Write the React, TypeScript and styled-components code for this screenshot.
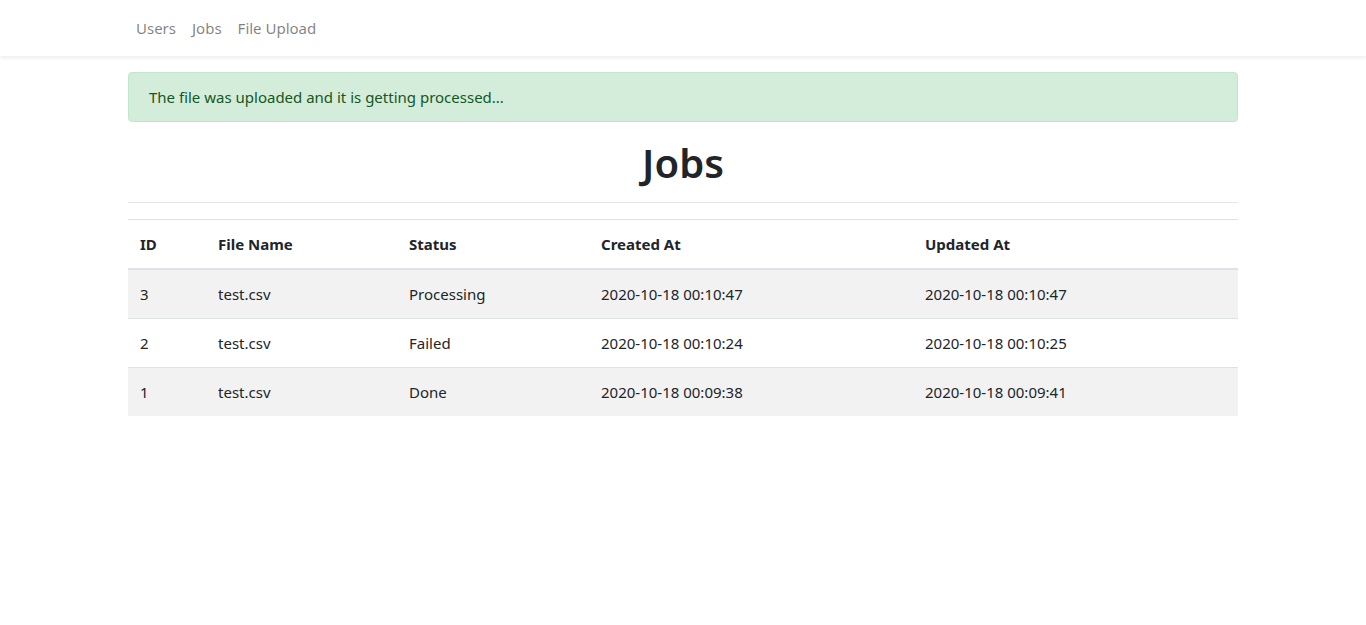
import React from "react";
import styled, { createGlobalStyle } from "styled-components";

const GlobalStyle = createGlobalStyle`
  html, body {
    margin: 0;
    padding: 0;
    background: #fff;
  }
  body {
    font-family: "Noto Sans", "Open Sans", Arial, sans-serif;
    font-size: 15px;
    line-height: 24px;
    color: #212529;
  }
  *, *::before, *::after {
    box-sizing: border-box;
  }
`;

const Navbar = styled.nav`
  height: 56px;
  background: #fff;
  box-shadow: 0 2px 4px rgba(0, 0, 0, 0.075);
  display: flex;
  align-items: center;
`;

const Container = styled.div`
  width: 1110px;
  margin: 0 auto;
`;

const NavList = styled.ul`
  list-style: none;
  margin: 0;
  padding: 0;
  display: flex;
`;

const NavLink = styled.a`
  display: block;
  padding: 8px;
  color: rgba(0, 0, 0, 0.5);
  text-decoration: none;
  cursor: pointer;
`;

const Main = styled(Container)`
  padding-top: 16px;
`;

const Alert = styled.div`
  padding: 12px 20px;
  margin-bottom: 16px;
  background: #d4edda;
  border: 1px solid #c3e6cb;
  border-radius: 4px;
  color: #155724;
`;

const Title = styled.h1`
  margin: 0;
  padding-top: 2px;
  height: 48px;
  font-size: 40px;
  font-weight: 600;
  line-height: 46px;
  text-align: center;
`;

const Rule = styled.hr`
  margin: 16px 0;
  border: 0;
  border-top: 1px solid rgba(0, 0, 0, 0.1);
`;

const Table = styled.table`
  width: 100%;
  table-layout: fixed;
  border-collapse: collapse;
  color: #212529;
`;

const Col = styled.col<{ $w?: number }>`
  width: ${(p) => (p.$w ? `${p.$w}px` : "auto")};
`;

const Th = styled.th`
  padding: 12px;
  text-align: left;
  font-weight: 700;
  border-top: 1px solid #dee2e6;
  border-bottom: 2px solid #dee2e6;
`;

const Row = styled.tr`
  &:nth-of-type(odd) {
    background: rgba(0, 0, 0, 0.05);
  }
`;

const Td = styled.td`
  padding: 12px;
  border-top: 1px solid #dee2e6;
`;

const jobs = [
  { id: 3, name: "test.csv", status: "Processing", created: "2020-10-18 00:10:47", updated: "2020-10-18 00:10:47" },
  { id: 2, name: "test.csv", status: "Failed", created: "2020-10-18 00:10:24", updated: "2020-10-18 00:10:25" },
  { id: 1, name: "test.csv", status: "Done", created: "2020-10-18 00:09:38", updated: "2020-10-18 00:09:41" },
];

export default function App() {
  return (
    <>
      <GlobalStyle />
      <Navbar>
        <Container>
          <NavList>
            <li><NavLink>Users</NavLink></li>
            <li><NavLink>Jobs</NavLink></li>
            <li><NavLink>File Upload</NavLink></li>
          </NavList>
        </Container>
      </Navbar>
      <Main>
        <Alert>The file was uploaded and it is getting processed...</Alert>
        <Title>Jobs</Title>
        <Rule />
        <Table>
          <colgroup>
            <Col $w={78} />
            <Col $w={191} />
            <Col $w={192} />
            <Col $w={324} />
            <Col />
          </colgroup>
          <thead>
            <tr>
              <Th>ID</Th>
              <Th>File Name</Th>
              <Th>Status</Th>
              <Th>Created At</Th>
              <Th>Updated At</Th>
            </tr>
          </thead>
          <tbody>
            {jobs.map((j) => (
              <Row key={j.id}>
                <Td>{j.id}</Td>
                <Td>{j.name}</Td>
                <Td>{j.status}</Td>
                <Td>{j.created}</Td>
                <Td>{j.updated}</Td>
              </Row>
            ))}
          </tbody>
        </Table>
      </Main>
    </>
  );
}
